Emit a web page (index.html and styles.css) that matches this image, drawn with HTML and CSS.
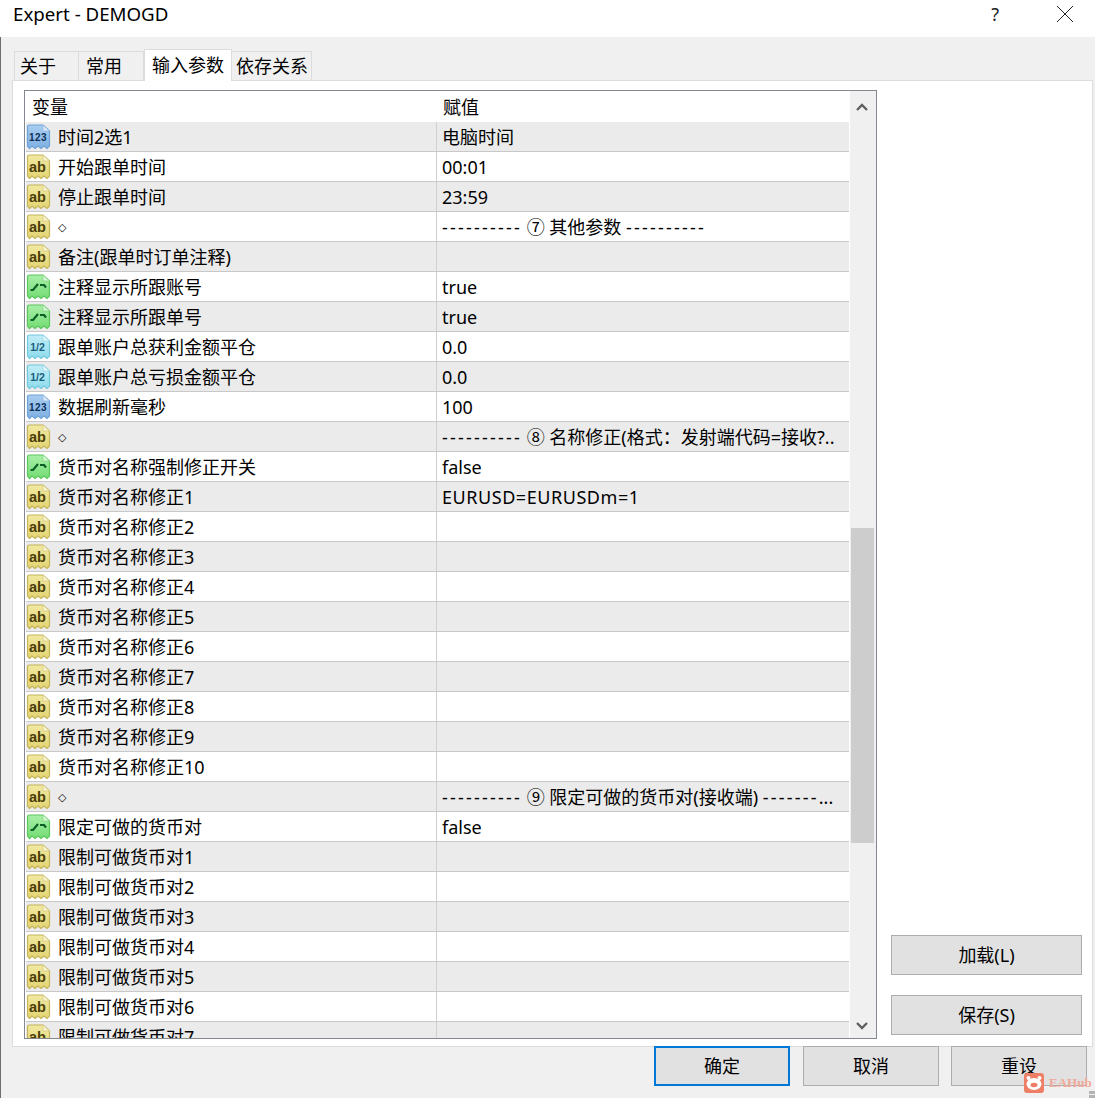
FILE: index.html
```html
<!DOCTYPE html>
<html lang="zh">
<head>
<meta charset="utf-8">
<title>Expert - DEMOGD</title>
<link rel="stylesheet" href="styles.css">
</head>
<body>
<svg class="defs" width="0" height="0" aria-hidden="true">
  <defs>
    <linearGradient id="g-num" x1="0" y1="0" x2="0" y2="1"><stop offset="0" stop-color="#a9cdf0"/><stop offset="1" stop-color="#7fb0e2"/></linearGradient>
    <linearGradient id="g-str" x1="0" y1="0" x2="0" y2="1"><stop offset="0" stop-color="#f2e9a2"/><stop offset="1" stop-color="#e3d472"/></linearGradient>
    <linearGradient id="g-bool" x1="0" y1="0" x2="0" y2="1"><stop offset="0" stop-color="#a8efa8"/><stop offset="1" stop-color="#74dc74"/></linearGradient>
    <linearGradient id="g-dbl" x1="0" y1="0" x2="0" y2="1"><stop offset="0" stop-color="#c2eef7"/><stop offset="1" stop-color="#8fdbec"/></linearGradient>
  </defs>
  <symbol id="i-num" viewBox="0 0 25 26">
    <path d="M1.5 3 Q1.5 1 3.5 1 H17 L23.5 7 V22 L21 24.5 L18 22 L15 24.5 L12 22 L9 24.5 L6 22 L3.5 24.5 L1.5 22 Z" fill="url(#g-num)" stroke="#6ea3d8" stroke-width="1.2"/>
    <path d="M17 1 V7 H23.5 Z" fill="#dceafa" stroke="#8db6de" stroke-width=".7"/>
    <text x="12" y="17" class="ico-t ico-t-s" fill="#0e3058">123</text>
  </symbol>
  <symbol id="i-str" viewBox="0 0 25 26">
    <path d="M1.5 3 Q1.5 1 3.5 1 H17 L23.5 7 V22 L21 24.5 L18 22 L15 24.5 L12 22 L9 24.5 L6 22 L3.5 24.5 L1.5 22 Z" fill="url(#g-str)" stroke="#c4b45a" stroke-width="1.2"/>
    <path d="M17 1 V7 H23.5 Z" fill="#f8f3d0" stroke="#d3c67c" stroke-width=".7"/>
    <text x="11.5" y="17.5" class="ico-t" fill="#4a3d08">ab</text>
  </symbol>
  <symbol id="i-bool" viewBox="0 0 25 26">
    <path d="M1.5 3 Q1.5 1 3.5 1 H17 L23.5 7 V22 L21 24.5 L18 22 L15 24.5 L12 22 L9 24.5 L6 22 L3.5 24.5 L1.5 22 Z" fill="url(#g-bool)" stroke="#5cc65c" stroke-width="1.2"/>
    <path d="M17 1 V7 H23.5 Z" fill="#d8f8d8" stroke="#83d683" stroke-width=".7"/>
    <path d="M4.5 16 H7 L12 10 M14 11 H18 L20 13.5" fill="none" stroke="#0a5f25" stroke-width="2.2"/>
  </symbol>
  <symbol id="i-dbl" viewBox="0 0 25 26">
    <path d="M1.5 3 Q1.5 1 3.5 1 H17 L23.5 7 V22 L21 24.5 L18 22 L15 24.5 L12 22 L9 24.5 L6 22 L3.5 24.5 L1.5 22 Z" fill="url(#g-dbl)" stroke="#72c8de" stroke-width="1.2"/>
    <path d="M17 1 V7 H23.5 Z" fill="#e2f6fb" stroke="#93d6e6" stroke-width=".7"/>
    <text x="11.5" y="16.5" class="ico-t ico-t-h" fill="#1a5d7c">1/2</text>
  </symbol>
</svg>

<div class="window">
  <header class="titlebar">
    <span class="title">Expert - DEMOGD</span>
    <div class="title-actions">
      <span class="help">?</span>
      <svg class="close" width="18" height="18" viewBox="0 0 18 18"><path d="M1 1 L17 17 M17 1 L1 17" stroke="#222" stroke-width="1" fill="none"/></svg>
    </div>
  </header>

  <main class="dialog">
    <nav class="tabs">
      <span class="tab tab-a">关于</span>
      <span class="tab tab-b">常用</span>
      <span class="tab tab-active">输入参数</span>
      <span class="tab tab-c">依存关系</span>
    </nav>

    <section class="panel">
      <div class="grid">
        <div class="list">
          <div class="head"><span class="name-h">变量</span><span class="val-h">赋值</span></div>
          <div class="row"><div class="name"><svg class="ico"><use href="#i-num"/></svg>时间2选1</div><div class="val">电脑时间</div></div>
          <div class="row"><div class="name"><svg class="ico"><use href="#i-str"/></svg>开始跟单时间</div><div class="val">00:01</div></div>
          <div class="row"><div class="name"><svg class="ico"><use href="#i-str"/></svg>停止跟单时间</div><div class="val">23:59</div></div>
          <div class="row"><div class="name"><svg class="ico"><use href="#i-str"/></svg><span class="dia">◇</span></div><div class="val"><span class="dash">----------</span> ⑦ 其他参数 <span class="dash">----------</span></div></div>
          <div class="row"><div class="name"><svg class="ico"><use href="#i-str"/></svg>备注(跟单时订单注释)</div><div class="val"></div></div>
          <div class="row"><div class="name"><svg class="ico"><use href="#i-bool"/></svg>注释显示所跟账号</div><div class="val">true</div></div>
          <div class="row"><div class="name"><svg class="ico"><use href="#i-bool"/></svg>注释显示所跟单号</div><div class="val">true</div></div>
          <div class="row"><div class="name"><svg class="ico"><use href="#i-dbl"/></svg>跟单账户总获利金额平仓</div><div class="val">0.0</div></div>
          <div class="row"><div class="name"><svg class="ico"><use href="#i-dbl"/></svg>跟单账户总亏损金额平仓</div><div class="val">0.0</div></div>
          <div class="row"><div class="name"><svg class="ico"><use href="#i-num"/></svg>数据刷新毫秒</div><div class="val">100</div></div>
          <div class="row"><div class="name"><svg class="ico"><use href="#i-str"/></svg><span class="dia">◇</span></div><div class="val"><span class="dash">----------</span> ⑧ 名称修正(格式：发射端代码=接收?..</div></div>
          <div class="row"><div class="name"><svg class="ico"><use href="#i-bool"/></svg>货币对名称强制修正开关</div><div class="val">false</div></div>
          <div class="row"><div class="name"><svg class="ico"><use href="#i-str"/></svg>货币对名称修正1</div><div class="val wide">EURUSD=EURUSDm=1</div></div>
          <div class="row"><div class="name"><svg class="ico"><use href="#i-str"/></svg>货币对名称修正2</div><div class="val"></div></div>
          <div class="row"><div class="name"><svg class="ico"><use href="#i-str"/></svg>货币对名称修正3</div><div class="val"></div></div>
          <div class="row"><div class="name"><svg class="ico"><use href="#i-str"/></svg>货币对名称修正4</div><div class="val"></div></div>
          <div class="row"><div class="name"><svg class="ico"><use href="#i-str"/></svg>货币对名称修正5</div><div class="val"></div></div>
          <div class="row"><div class="name"><svg class="ico"><use href="#i-str"/></svg>货币对名称修正6</div><div class="val"></div></div>
          <div class="row"><div class="name"><svg class="ico"><use href="#i-str"/></svg>货币对名称修正7</div><div class="val"></div></div>
          <div class="row"><div class="name"><svg class="ico"><use href="#i-str"/></svg>货币对名称修正8</div><div class="val"></div></div>
          <div class="row"><div class="name"><svg class="ico"><use href="#i-str"/></svg>货币对名称修正9</div><div class="val"></div></div>
          <div class="row"><div class="name"><svg class="ico"><use href="#i-str"/></svg>货币对名称修正10</div><div class="val"></div></div>
          <div class="row"><div class="name"><svg class="ico"><use href="#i-str"/></svg><span class="dia">◇</span></div><div class="val"><span class="dash">----------</span> ⑨ 限定可做的货币对(接收端) <span class="dash">-------</span>...</div></div>
          <div class="row"><div class="name"><svg class="ico"><use href="#i-bool"/></svg>限定可做的货币对</div><div class="val">false</div></div>
          <div class="row"><div class="name"><svg class="ico"><use href="#i-str"/></svg>限制可做货币对1</div><div class="val"></div></div>
          <div class="row"><div class="name"><svg class="ico"><use href="#i-str"/></svg>限制可做货币对2</div><div class="val"></div></div>
          <div class="row"><div class="name"><svg class="ico"><use href="#i-str"/></svg>限制可做货币对3</div><div class="val"></div></div>
          <div class="row"><div class="name"><svg class="ico"><use href="#i-str"/></svg>限制可做货币对4</div><div class="val"></div></div>
          <div class="row"><div class="name"><svg class="ico"><use href="#i-str"/></svg>限制可做货币对5</div><div class="val"></div></div>
          <div class="row"><div class="name"><svg class="ico"><use href="#i-str"/></svg>限制可做货币对6</div><div class="val"></div></div>
          <div class="row"><div class="name"><svg class="ico"><use href="#i-str"/></svg>限制可做货币对7</div><div class="val"></div></div>
        </div>
        <div class="scrollbar">
          <svg class="arrow" width="12" height="8" viewBox="0 0 12 8"><path d="M1 7 L6 2 L11 7" fill="none" stroke="#606060" stroke-width="2.4"/></svg>
          <div class="thumb"></div>
          <svg class="arrow arrow-down" width="12" height="8" viewBox="0 0 12 8"><path d="M1 1 L6 6 L11 1" fill="none" stroke="#606060" stroke-width="2.4"/></svg>
        </div>
      </div>
      <aside class="side">
        <button class="btn side-btn">加载(L)</button>
        <button class="btn side-btn">保存(S)</button>
      </aside>
    </section>

    <footer class="footer">
      <button class="btn foot-btn primary">确定</button>
      <button class="btn foot-btn">取消</button>
      <button class="btn foot-btn">重设</button>
    </footer>
  </main>
</div>

<div class="watermark">
  <svg width="20" height="20" viewBox="0 0 20 20"><rect width="20" height="20" rx="3" fill="#ee7f66"/><ellipse cx="10" cy="11" rx="7.5" ry="6" fill="#fff"/><circle cx="4.5" cy="5" r="2" fill="#fff"/><circle cx="15.5" cy="5" r="2" fill="#fff"/><ellipse cx="10" cy="12" rx="3.5" ry="2.2" fill="#ee7f66"/></svg>
  <span class="wm-text">EAHub</span>
</div>
<div class="grip"></div>
</body>
</html>
```

FILE: styles.css
```css
* { box-sizing: border-box; }
html, body { margin: 0; padding: 0; }
body {
  width: 1095px;
  height: 1098px;
  overflow: hidden;
  position: relative;
  background: #f0f0f0;
  font-family: "Noto Sans", "Noto Sans CJK SC", sans-serif;
  font-size: 18px;
  color: #000;
}
.defs { position: absolute; }
.window { display: flex; flex-direction: column; height: 1098px; }

.titlebar {
  height: 37px;
  background: #fff;
  display: flex;
  justify-content: space-between;
  align-items: center;
  padding: 0 21px 9px 13px;
  flex: none;
}
.title { font-size: 18.7px; line-height: 28px; }
.title-actions { display: flex; align-items: center; gap: 57px; }
.help { font-size: 18px; line-height: 24px; color: #222; }

.dialog {
  flex: 1;
  display: flex;
  flex-direction: column;
  border-left: 1px solid #6d6d6d;
  padding: 12px 2px 0 11px;
  min-height: 0;
}

.tabs { display: flex; height: 31px; padding-left: 2px; align-items: flex-end; flex: none; }
.tab {
  height: 29px;
  background: #f0f0f0;
  border: 1px solid #dcdcdc;
  border-bottom: none;
  border-left: none;
  padding: 0 5px;
  line-height: 29px;
  white-space: nowrap;
  font-size: 18px;
}
.tab-a { width: 65px; border-left: 1px solid #dcdcdc; }
.tab-b { width: 65px; padding-left: 7px; }
.tab-c { width: 80px; padding: 0 3px 0 4px; }
.tab-active {
  height: 32px;
  width: 88px;
  background: #fff;
  border: 1px solid #dcdcdc;
  border-bottom: none;
  margin-bottom: -1px;
  position: relative;
  z-index: 1;
  line-height: 30px;
  padding: 0 7px;
}

.panel {
  height: 967px;
  flex: none;
  background: #fff;
  border: 1px solid #dcdcdc;
  display: flex;
  padding: 9px 10px 7px 11px;
  gap: 14px;
  margin-bottom: -1px;
}

.grid {
  width: 853px;
  flex: none;
  border: 1px solid #828790;
  display: flex;
  padding: 0 1px 0 1px;
  overflow: hidden;
  background: #fff;
}
.list { width: 823px; flex: none; overflow: hidden; }
.head {
  display: flex;
  height: 31px;
  line-height: 32px;
  background: #fff;
}
.name-h { width: 410px; padding-left: 6px; }
.val-h { padding-left: 7px; }

.row {
  display: flex;
  height: 30px;
  border-bottom: 1px solid #c8c8c8;
  background: #fff;
  flex: none;
}
.row:nth-child(even) { background: #ebebeb; }
.name {
  width: 411px;
  flex: none;
  display: flex;
  align-items: flex-start;
  border-right: 1px solid #cfcfcf;
  white-space: nowrap;
  line-height: 31px;
}
.val {
  flex: 1;
  padding-left: 5px;
  line-height: 31px;
  white-space: nowrap;
  overflow: hidden;
}
.wide { letter-spacing: .55px; }
.dash { letter-spacing: 2.2px; }
.dia { font-family: "DejaVu Sans", sans-serif; font-size: 11px; font-weight: 700; }
.ico { width: 25px; height: 26px; flex: none; margin: 2px 7px 0 0; }
.ico-t { font-family: "Liberation Sans", sans-serif; font-weight: 700; font-size: 14.5px; text-anchor: middle; }
.ico-t-s { font-size: 10px; letter-spacing: .4px; }
.ico-t-h { font-size: 10.5px; }

.scrollbar {
  width: 27px;
  flex: none;
  background: #f0f0f0;
  display: flex;
  flex-direction: column;
  align-items: center;
  border-left: 1px solid #fff;
  position: relative;
}
.arrow { margin: 12px 2px 0 0; flex: none; }
.arrow-down { margin: auto 2px 8px 0; }
.thumb {
  width: 23px;
  height: 315px;
  background: #cdcdcd;
  margin: 417px 1px 0 0;
  flex: none;
}

.side {
  flex: 1;
  display: flex;
  flex-direction: column;
  justify-content: flex-end;
  gap: 20px;
  padding-bottom: 4px;
}
.btn {
  font: inherit;
  color: #000;
  background: #e1e1e1;
  border: 1px solid #adadad;
  height: 40px;
  padding: 0 0 1px;
  line-height: 36px;
}
.side-btn { width: 191px; }

.footer {
  display: flex;
  justify-content: flex-end;
  gap: 12px;
  padding-right: 6px;
  position: relative;
  z-index: 1;
}
.foot-btn { width: 136px; }
.foot-btn.primary { border: 2px solid #0078d7; margin-right: 1px; }

.watermark {
  position: absolute;
  left: 1024px;
  top: 1073px;
  display: flex;
  align-items: center;
  gap: 5px;
  z-index: 2;
}
.wm-text {
  font-family: "Liberation Serif", serif;
  font-weight: 700;
  font-size: 13px;
  color: #f0a898;
}
.grip {
  position: absolute;
  right: 0;
  bottom: 0;
  width: 6px;
  height: 8px;
  background: repeating-linear-gradient(0deg, #b4b4b4 0 3px, #f0f0f0 3px 4px);
}
```
